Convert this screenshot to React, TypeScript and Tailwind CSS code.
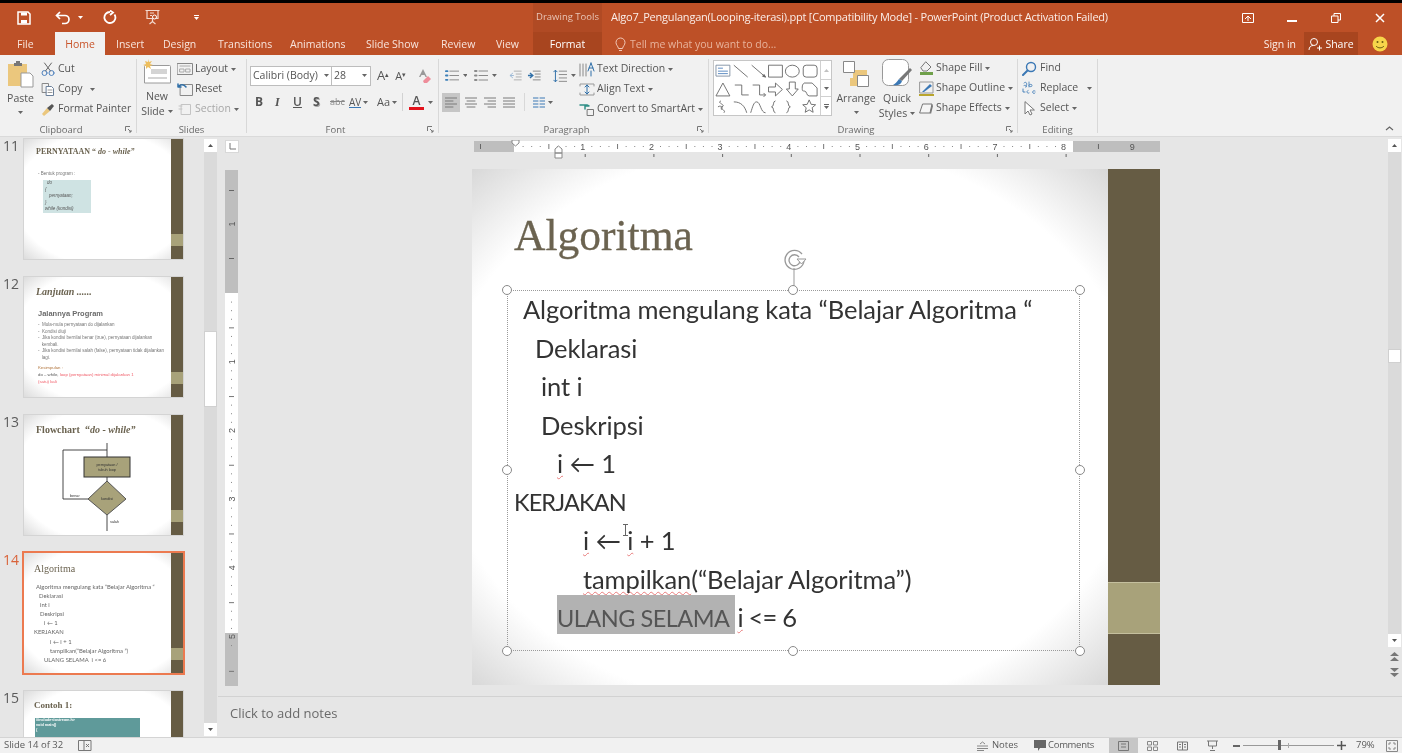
import type { ReactNode } from "react";

const Caret = ({ className = "" }: { className?: string }) => (
  <svg width="5" height="3" viewBox="0 0 5 3" className={className}>
    <path d="M0 0h5L2.5 3z" fill="#666" />
  </svg>
);

const Launcher = () => (
  <svg width="7" height="7" viewBox="0 0 7 7" className="absolute right-[4px] bottom-0">
    <path d="M.5 5V.5H5M3 3l3 3M6 4v2H4" fill="none" stroke="#777" />
  </svg>
);

const Group = ({ width, label, launcher, children }: { width: string; label: string; launcher?: boolean; children: ReactNode }) => (
  <div className={`${width} relative mt-[4px] flex h-[74px] shrink-0 flex-col border-r border-[#D8D8D8]`}>
    <div className="flex h-[60px] min-h-0">{children}</div>
    <div className={`mt-auto -mb-[3px] text-center text-[9.500px] leading-[13px] tracking-normal text-[#6a6a6a] ${launcher ? "pr-[14px]" : ""}`}>{label}</div>
    {launcher && <Launcher />}
  </div>
);

const Item = ({ icon, label, caret, muted, iconWidth = "w-[16px]", caretGap = "ml-[3px]" }: { icon: ReactNode; label: string; caret?: boolean; muted?: boolean; iconWidth?: string; caretGap?: string }) => (
  <div className={`flex h-[20px] items-center whitespace-nowrap ${muted ? "text-[#a8a8a8]" : "text-[#555]"}`}>
    <span className={`${iconWidth} flex shrink-0 justify-center`}>{icon}</span>
    <span className="ml-[2px]">{label}</span>
    {caret && <Caret className={caretGap} />}
  </div>
);

const Big = ({ width, icon, top, bottom, caret }: { width: string; icon: ReactNode; top: string; bottom?: string; caret?: boolean }) => (
  <div className={`${width} flex shrink-0 flex-col items-center text-[#555]`}>
    <div className="flex h-[34px] items-center">{icon}</div>
    <div className="mt-[2px] h-[15px] leading-[15px]">{top}</div>
    <div className="flex h-[15px] items-center leading-[15px]">
      {bottom}
      {caret && <Caret className={bottom ? "ml-[3px]" : ""} />}
    </div>
  </div>
);

const Ico = ({ w = 14, h = 14, children }: { w?: number; h?: number; children: ReactNode }) => (
  <svg width={w} height={h} viewBox={`0 0 ${w} ${h}`} fill="none" strokeLinecap="round" strokeLinejoin="round">
    {children}
  </svg>
);

const ListIcon = ({ dots }: { dots: string }) => (
  <Ico w={14} h={13}>
    <path d="M5 2h9M5 6.5h9M5 11h9" stroke="#8a8a8a" />
    <path d="M1 2h1.5M1 6.5h1.5M1 11h1.5" stroke={dots} strokeWidth="2" />
  </Ico>
);

const AlignIcon = ({ d, color = "#7a7a7a" }: { d: string; color?: string }) => (
  <Ico w={12} h={11}>
    <path d={d} stroke={color} />
  </Ico>
);

function TitleRows() {
  return (
    <header className="shrink-0 bg-[#BD5027] text-white">
      <div className="h-[3px] bg-black" />
      <div className="flex h-[29px] items-center">
        <div className="flex h-full w-[533px] shrink-0 items-center">
          <svg width="16" height="16" viewBox="0 0 16 16" className="ml-[16px]">
            <path d="M2 2h10l2 2v10H2z" fill="none" stroke="#fff" strokeWidth="1.5" />
            <path d="M5 2.5h6v3H5zM5 10h6v3.5H5z" fill="#fff" />
          </svg>
          <svg width="16" height="14" viewBox="0 0 16 14" className="ml-[23px]">
            <path d="M5 1L1.5 4.5 5 8M2 4.500h8a4 4 0 0 1 0 8H7" fill="none" stroke="#fff" strokeWidth="1.7" />
          </svg>
          <Caret className="ml-[7px] [&>path]:fill-white" />
          <svg width="15" height="15" viewBox="0 0 15 15" className="ml-[19px]">
            <path d="M12.500 4.500A5.500 5.500 0 1 1 8 2M8 .5L11 2.500 8 5" fill="none" stroke="#fff" strokeWidth="1.8" />
          </svg>
          <svg width="17" height="17" viewBox="0 0 17 17" className="ml-[27px]">
            <path d="M1.500 1.500h14M3 1.500v8h11v-8M8.500 9.500v3M5.500 15l3-2.500 3 2.500" fill="none" stroke="#f3d9cf" strokeWidth="1.200" />
            <path d="M6 4h4M6 6.500h2" stroke="#f3d9cf" />
            <circle cx="10.500" cy="8" r="2" fill="#BD5027" stroke="#fff" />
          </svg>
          <span className="ml-[33px] flex flex-col items-center gap-[1px]">
            <span className="h-[1px] w-[5px] bg-white" />
            <Caret className="[&>path]:fill-white" />
          </span>
        </div>
        <div className="flex h-full w-[69px] shrink-0 items-center justify-center bg-[#B04A24] text-[9.500px] text-[#e9c6b8]">Drawing Tools</div>
        <div className="ml-[9px] text-[11px] tracking-[-0.21px] whitespace-nowrap text-[#fbeee9]">Algo7_Pengulangan(Looping-iterasi).ppt [Compatibility Mode] - PowerPoint (Product Activation Failed)</div>
        <div className="ml-auto flex">
          <span className="flex w-[44px] justify-center">
            <svg width="12" height="10" viewBox="0 0 12 10"><path d="M.5.500h11v9H.5z" fill="none" stroke="#fff" /><path d="M3 6l3-3 3 3M6 3v5" stroke="#fff" fill="none" /></svg>
          </span>
          <span className="flex w-[44px] items-center justify-center">
            <span className="mt-[6px] h-[2px] w-[10px] bg-white" />
          </span>
          <span className="flex w-[44px] justify-center">
            <svg width="10" height="10" viewBox="0 0 10 10"><path d="M.5 3h6.500v6.500H.5zM3 3V.5h6.500V7H7" fill="none" stroke="#fff" /></svg>
          </span>
          <span className="flex w-[44px] justify-center">
            <svg width="10" height="10" viewBox="0 0 10 10"><path d="M1 1l8 8M9 1l-8 8" stroke="#fff" strokeWidth="1.500" /></svg>
          </span>
        </div>
      </div>
      <div className="flex h-[23px] text-[10.500px] leading-[24px] text-[#f8e4dc]">
        <div className="flex w-[533px] shrink-0">
          <span className="ml-[17px] w-[38px]">File</span>
          <span className="w-[50px] bg-[#F1F1F1] text-center text-[#C9552B]">Home</span>
          <span className="ml-[11px] w-[47px]">Insert</span>
          <span className="w-[55px]">Design</span>
          <span className="w-[72px]">Transitions</span>
          <span className="w-[76px]">Animations</span>
          <span className="w-[75px]">Slide Show</span>
          <span className="w-[55px]">Review</span>
          <span>View</span>
        </div>
        <div className="w-[69px] shrink-0 bg-[#A8451F] text-center text-white">Format</div>
        <svg width="11" height="15" viewBox="0 0 11 15" className="mt-[5px] ml-[13px]">
          <path d="M3.500 11.500C3 9 1 8 1 5.500a4.500 4.500 0 0 1 9 0C10 8 8 9 7.500 11.500zM4 13.500h3" fill="none" stroke="#f2c9b8" />
        </svg>
        <span className="ml-[4px] text-[#e8b39c]">Tell me what you want to do...</span>
        <div className="ml-auto flex">
          <span className="mr-[8px] text-[#fbeee9]">Sign in</span>
          <span className="flex h-[23px] w-[54px] items-center justify-center gap-[3px] bg-[#A8451F] text-white">
            <svg width="14" height="14" viewBox="0 0 14 14"><circle cx="6" cy="5" r="3.500" fill="none" stroke="#fff" /><path d="M1 13c0-3 2-4.500 4-4.500M9 11h5M11.500 8.500v5" stroke="#fff" fill="none" /></svg>
            Share
          </span>
          <span className="mx-[14px] flex items-center">
            <svg width="16" height="16" viewBox="0 0 16 16">
              <circle cx="8" cy="8" r="7.500" fill="#F7D54A" />
              <circle cx="5.500" cy="6" r="1" fill="#6b5a10" />
              <circle cx="10.500" cy="6" r="1" fill="#6b5a10" />
              <path d="M4 10c2 2.500 6 2.500 8 0" fill="none" stroke="#6b5a10" />
            </svg>
          </span>
        </div>
      </div>
    </header>
  );
}

const Gallery = () => (
  <div className="mt-[1px] ml-[4px] flex h-[56px] w-[119px] shrink-0 border border-[#C6C6C6] bg-white">
    <svg width="107" height="54" viewBox="0 0 107 54" fill="none" stroke="#666" strokeWidth="0.9">
      <path d="M2 4h14v11H2z" stroke="#7d8ca0" />
      <path d="M4 7h5M4 10h10M4 12.500h10" stroke="#4f81bd" />
      <path d="M20 4l14 12M38 4l14 12" />
      <path d="M52 16l-3-.8 1.500-1.800z" fill="#666" />
      <path d="M55 4h14v12H55z" />
      <ellipse cx="79" cy="10" rx="7" ry="6" />
      <rect x="90" y="4" width="14" height="12" rx="3" />
      <path d="M9 22l7 13H2zM21 24h7v10h7M39 24h7v10h6M50 32l2 2-2 2" />
      <path d="M55 26h7v-4l7 6.500-7 6.500v-4h-7zM76 21h6v7h3l-6 7-6-7h3zM91 22h8l5 5v8H96c-3 0-2-5-5-5-2 0-2 0-2-4 0-3 2-4 2-4z" />
      <path d="M7 40c-5 2 6 4 1 6-4 2 5 3 2 6M4 46c3-2 6 1 3 3M20 41c7 0 11 4 13 11M37 52c2-6 3-11 6-11 4 0 4 11 9 11" />
      <path d="M62 40c-3 0-1 6-4 6 3 0 1 6 4 6M73 40c3 0 1 6 4 6-3 0-1 6-4 6" />
      <path d="M96 39l2 4.500 4.500.4-3.500 3 1 4.600-4-2.400-4 2.400 1-4.600-3.500-3 4.500-.4z" />
    </svg>
    <div className="flex w-[11px] flex-col border-l border-[#D0D0D0]">
      <span className="flex h-[18px] items-center justify-center"><Caret className="rotate-180 opacity-40" /></span>
      <span className="flex h-[18px] items-center justify-center border-y border-[#D0D0D0]"><Caret /></span>
      <span className="flex flex-1 flex-col items-center justify-center gap-[1px]"><span className="h-[1px] w-[5px] bg-[#666]" /><Caret /></span>
    </div>
  </div>
);

function Ribbon() {
  return (
    <section className="flex h-[82px] shrink-0 border-b border-[#DADADA] bg-[#F1F1F1] text-[10.500px]">
      <Group width="w-[137px]" label="Clipboard" launcher>
        <Big
          width="ml-[6px] w-[29px]"
          icon={
            <svg width="27" height="28" viewBox="0 0 27 28">
              <path d="M1 4h19v22H1z" fill="#EBC77D" />
              <path d="M7 3h2V1h4v2h2v3H7z" fill="#777" />
              <path d="M14 13h9l3 3v11H14z" fill="#fff" stroke="#999" />
            </svg>
          }
          top="Paste"
          caret
        />
        <div className="ml-[5px]">
          <Item icon={<Ico><circle cx="3.500" cy="11" r="2.500" stroke="#4f81bd" /><circle cx="10.500" cy="11" r="2.500" stroke="#4f81bd" /><path d="M4.500 9L10.500 1M9.500 9L3.500 1" stroke="#666" /></Ico>} label="Cut" />
          <Item icon={<Ico><path d="M1.500 1.500h6v9h-6z" stroke="#888" /><path d="M5.500 4.500h5l2 2v7h-7z" fill="#fff" stroke="#6b7f99" /><path d="M7 8h4M7 10.500h4" stroke="#999" /></Ico>} label="Copy" caret caretGap="ml-[7px]" />
          <Item icon={<Ico><path d="M1 12l5-6 3 3-6 5z" fill="#EBC77D" /><path d="M6 6l3 3 4-5-2-2z" fill="#555" /></Ico>} label="Format Painter" />
        </div>
      </Group>

      <Group width="w-[110px]" label="Slides">
        <Big
          width="ml-[2px] w-[36px]"
          icon={
            <svg width="28" height="28" viewBox="0 0 28 28">
              <path d="M2.500 6.500h24a1 1 0 0 1 1 1V24h-26V7.500a1 1 0 0 1 1-1z" fill="#fff" stroke="#9a9a9a" />
              <path d="M8 10h16v5H8zM5 18h19v2H5z" fill="#d4d4d4" />
              <path d="M5 0l1 3 3-1-2 3 3 1-3 1 1 3-3-2-2 2 0-3-3-1 3-1-1-3 3 1z" fill="#EDBE5E" />
            </svg>
          }
          top="New"
          bottom="Slide"
          caret
        />
        <div className="ml-[2px]">
          <Item icon={<Ico w={16} h={12}><path d="M.5.500h15v11H.5z" stroke="#888" /><path d="M3 3h10M3 6h4v3H3zM9 6h4v3H9z" stroke="#aaa" /></Ico>} label="Layout" caret />
          <Item icon={<Ico w={16} h={13}><path d="M3.500 1.500h12v11h-12z" stroke="#888" /><path d="M1 4c2-3 6-3 8 0M1 1v3h3" stroke="#2f6fa8" strokeWidth="1.500" /></Ico>} label="Reset" />
          <Item muted icon={<Ico w={14} h={13}><path d="M3.500 1.500h9v10h-9zM1 3h3M1 6h3" stroke="#c4c4c4" /></Ico>} label="Section" caret />
        </div>
      </Group>

      <Group width="w-[192px]" label="Font" launcher>
        <div className="pt-[6px] pl-[3px]">
          <div className="flex h-[21px] items-center">
            <div className="flex h-[20px] w-[82px] items-center border border-[#BDBDBD] bg-white pl-[2px] whitespace-nowrap text-[#555]">
              Calibri (Body)
              <Caret className="mr-[2px] ml-auto" />
            </div>
            <div className="-ml-[1px] flex h-[20px] w-[40px] items-center border border-[#BDBDBD] bg-white pl-[2px] text-[#555]">
              28
              <Caret className="mr-[3px] ml-auto" />
            </div>
            <span className="ml-[6px] text-[13px] leading-none text-[#555]">A<sup className="text-[7px]">▴</sup></span>
            <span className="ml-[6px] text-[11px] leading-none text-[#555]">A<sup className="text-[7px]">▾</sup></span>
            <svg width="14" height="16" viewBox="0 0 14 16" className="ml-[11px]">
              <path d="M6 1L2 9h1.500l1-2h3l1 2H10z" fill="#999" />
              <path d="M6 13l5-5 3 3-4 4H7z" fill="#EE8D9A" />
            </svg>
          </div>
          <div className="mt-[5px] flex h-[22px] items-center text-[12px] text-[#555]">
            <span className="ml-[5px] w-[20px] font-bold">B</span>
            <span className="w-[18px] font-['Liberation_Serif',serif] font-bold italic">I</span>
            <span className="w-[20px] font-semibold underline">U</span>
            <span className="w-[17px] font-bold [text-shadow:1px_1px_0_#aaa]">S</span>
            <span className="w-[19px] text-[9px] text-[#888] line-through">abc</span>
            <span className="flex w-[28px] items-center gap-[2px] text-[10px] leading-none text-[#555]">
              <span className="border-b border-[#3b78b5]">AV</span>
              <Caret />
            </span>
            <span className="flex w-[24px] items-center gap-[2px] text-[11px]">Aa<Caret /></span>
            <span className="mr-[4px] ml-[1px] h-[18px] w-[1px] bg-[#D2D2D2]" />
            <span className="ml-[2px] flex w-[15px] flex-col items-center text-[12px] leading-[12px] font-semibold text-[#555]">
              A<span className="h-[3px] w-[15px] bg-[#E3121C]" />
            </span>
            <Caret className="ml-[4px]" />
          </div>
        </div>
      </Group>

      <Group width="w-[270px]" label="Paragraph" launcher>
        <div className="flex">
          <div className="w-[137px] pt-[6px] pl-[3px]">
            <div className="flex h-[21px] items-center pl-[3px]">
              <ListIcon dots="#3b7fb8" />
              <Caret className="ml-[4px]" />
              <span className="ml-[7px]"><ListIcon dots="#8a8a8a" /></span>
              <Caret className="ml-[4px]" />
              <svg width="14" height="11" viewBox="0 0 14 11" className="ml-[11px]"><path d="M6 1h8M8 4h6M8 7h6M6 10h8" stroke="#b0b0b0" /><path d="M5 3L2 5.500 5 8M2 5.500h4" stroke="#9cb9d6" fill="none" /></svg>
              <svg width="14" height="11" viewBox="0 0 14 11" className="ml-[5px]"><path d="M6 1h8M8 4h6M8 7h6M6 10h8" stroke="#888" /><path d="M3 3l3 2.500L3 8M1 5.500h4" stroke="#2f6fa8" fill="none" strokeWidth="1.400" /></svg>
              <svg width="15" height="14" viewBox="0 0 15 14" className="ml-[12px]"><path d="M6 2h9M6 5.500h9M6 9h9M6 12.500h9" stroke="#8a8a8a" /><path d="M2.500 1v12M.5 3l2-2 2 2M.5 11l2 2 2-2" stroke="#2f6fa8" fill="none" /></svg>
              <Caret className="ml-[4px]" />
            </div>
            <div className="mt-[5px] flex h-[22px] items-center">
              <span className="flex h-[19px] w-[18px] items-center justify-center bg-[#C6C6C6]"><AlignIcon d="M0 1h12M0 4h8M0 7h12M0 10h8" /></span>
              <span className="ml-[4px] flex w-[14px] justify-center"><AlignIcon d="M0 1h12M2 4h8M0 7h12M2 10h8" /></span>
              <span className="ml-[5px] flex w-[14px] justify-center"><AlignIcon d="M0 1h12M4 4h8M0 7h12M4 10h8" /></span>
              <span className="ml-[5px] flex w-[14px] justify-center"><AlignIcon d="M0 1h12M0 4h12M0 7h12M0 10h12" /></span>
              <span className="ml-[8px] h-[18px] w-[1px] bg-[#D8D8D8]" />
              <span className="ml-[8px]"><AlignIcon d="M0 1h5M7 1h5M0 4h5M7 4h5M0 7h5M7 7h5M0 10h5M7 10h5" color="#3b78b5" /></span>
              <Caret className="ml-[3px]" />
            </div>
          </div>
          <div className="ml-[3px]">
            <Item icon={<Ico w={16} h={15}><path d="M1 2v12M4 2v12M7 2v12" stroke="#888" /><path d="M12 1l-3 8M12 1l3 8M10 6h4M12 9v5" stroke="#2f6fa8" /></Ico>} label="Text Direction" caret />
            <Item icon={<Ico w={16} h={13}><path d="M1 3V1h14v2M1 10v2h14v-2" stroke="#999" /><path d="M8 2v9M6 4l2-2 2 2M6 9l2 2 2-2" stroke="#2f6fa8" /></Ico>} label="Align Text" caret />
            <Item icon={<Ico w={16} h={13}><path d="M1 2h7l2 1H6v3" stroke="#2f8f86" strokeWidth="1.500" /><path d="M8.500 6.500h6v6h-6z" stroke="#777" /></Ico>} label="Convert to SmartArt" caret />
          </div>
        </div>
      </Group>

      <Group width="w-[309px]" label="Drawing" launcher>
        <div className="flex">
          <Gallery />
          <Big
            width="ml-[3px] w-[42px]"
            icon={
              <svg width="28" height="28" viewBox="0 0 28 28">
                <path d="M11 10h14v8H11zM8 18h10v8H8z" fill="#EBC77D" />
                <path d="M1.500 1.500h11v11h-11z" fill="#fff" stroke="#888" />
                <path d="M15.500 15.500h11v11h-11z" fill="#fff" stroke="#888" />
              </svg>
            }
            top="Arrange"
            caret
          />
          <Big
            width="w-[40px]"
            icon={
              <svg width="30" height="30" viewBox="0 0 30 30">
                <rect x=".5" y=".5" width="26" height="26" rx="6" fill="#fff" stroke="#999" />
                <path d="M28 9l2 2-10 11-3-2z" fill="#777" />
                <path d="M17 20l3 2c-1 4-5 5-9 4 2-1 4-3 6-6z" fill="#3B78B5" />
              </svg>
            }
            top="Quick"
            bottom="Styles"
            caret
          />
          <div className="-mt-[1px] ml-[1px]">
            <Item icon={<Ico w={15} h={15}><path d="M7 1l5 5-4 4H4L2 7z" stroke="#777" /><path d="M1 11h13v3H1z" fill="#6FA04A" /></Ico>} label="Shape Fill" caret />
            <Item icon={<Ico w={15} h={15}><path d="M1 1h13v11H1z" stroke="#999" /><path d="M3 11l8-8 2 2-8 6z" fill="#3B78B5" /><path d="M0 14h15" stroke="#B9A52E" strokeWidth="2" /></Ico>} label="Shape Outline" caret />
            <Item icon={<Ico w={15} h={13}><path d="M4 2h9l-2 9H1z" fill="#F5F5F5" stroke="#777" /><path d="M13 2l1 2-2 8-1-1z" fill="#777" /></Ico>} label="Shape Effects" caret />
          </div>
        </div>
      </Group>

      <Group width="w-[80px]" label="Editing">
        <div className="-mt-[1px] pl-[3px]">
          <Item iconWidth="w-[17px]" icon={<Ico w={15} h={15}><circle cx="9" cy="6" r="4.500" stroke="#3B78B5" strokeWidth="1.400" /><path d="M5.500 9.500L1 14" stroke="#3B78B5" strokeWidth="2" /></Ico>} label="Find" />
          <Item iconWidth="w-[17px]" icon={<Ico w={15} h={14}><path d="M2 2c2-2 4 0 2 4M2 4.500c2-1 3 1 2 1.500M7 1v5M7 4c1-1 3-1 3 .5S8 6 7 5" stroke="#3B78B5" strokeWidth=".8" /><path d="M1 8v3h2M7 12c-2 1-3-2-1-2.500M13 10c-2-1-3 1-2 2s2 0 2 0" stroke="#3B78B5" strokeWidth=".9" /></Ico>} label="Replace" caret caretGap="ml-[9px]" />
          <Item iconWidth="w-[17px]" icon={<Ico w={11} h={15}><path d="M1 1v12l3-3 2 4 2-1-2-4h4z" fill="#fff" stroke="#777" /></Ico>} label="Select" caret />
        </div>
      </Group>

      <div className="relative flex-1">
        <svg width="9" height="5" viewBox="0 0 9 5" className="absolute right-[8px] bottom-[5px]"><path d="M1 4l3.500-3L8 4" fill="none" stroke="#666" strokeWidth="1.200" /></svg>
      </div>
    </section>
  );
}

const Thumb = ({ n, active, children }: { n: number; active?: boolean; children: ReactNode }) => (
  <div className="flex shrink-0">
    <span className={`w-[24px] pl-[3px] text-[14px] leading-[14px] ${active ? "text-[#D9633A]" : "text-[#5b5b5b]"}`}>{n}</span>
    <div className={`relative h-[120px] w-[159px] shrink-0 bg-[radial-gradient(ellipse_at_center,#ffffff_78%,#dcdcdc_100%)] font-['Liberation_Sans',sans-serif] ${active ? "outline-2 outline-[#EC7A50]" : "outline outline-[#D4D4D4]"}`}>
      <div className="absolute top-0 right-0 flex h-full w-[12px] flex-col bg-[#665C44]">
        <span className="mt-[95px] h-[12px] bg-[#A8A27A]" />
      </div>
      {children}
    </div>
  </div>
);

const ThumbTitle = ({ className, children }: { className: string; children: ReactNode }) => (
  <div className={`absolute leading-none whitespace-nowrap text-[#6B6350] font-['Liberation_Serif',serif] ${className}`}>{children}</div>
);

const MiniLines = ({ lines, className }: { lines: string[]; className: string }) => (
  <div className={`absolute whitespace-pre text-[#777] ${className}`}>
    {lines.map((l, i) => (
      <div key={i}>{l}</div>
    ))}
  </div>
);

const miniSlide = [
  { pad: "pl-[2px]", text: "Algoritma mengulang kata “Belajar Algoritma “" },
  { pad: "pl-[5px]", text: "Deklarasi" },
  { pad: "pl-[6px]", text: "int i" },
  { pad: "pl-[6px]", text: "Deskripsi" },
  { pad: "pl-[10px]", text: "i ← 1" },
  { pad: "pl-0", text: "KERJAKAN" },
  { pad: "pl-[16px]", text: "i ← i + 1" },
  { pad: "pl-[16px]", text: "tampilkan(“Belajar Algoritma ”)" },
  { pad: "pl-[10px]", text: "ULANG SELAMA  i <= 6" },
];

function Thumbs() {
  return (
    <aside className="flex w-[218px] shrink-0 overflow-hidden">
      <div className="flex w-[203px] shrink-0 flex-col gap-[18px] pt-[2px]">
        <Thumb n={11}>
          <ThumbTitle className="top-[9px] left-[12px] text-[8px] font-bold">PERNYATAAN “ <i>do - while”</i></ThumbTitle>
          <MiniLines className="top-[32px] left-[14px] text-[4.500px]" lines={["- Bentuk program :"]} />
          <div className="absolute top-[41px] left-[19px] h-[33px] w-[48px] bg-[#CFE3E3] pl-[2px] text-[4.500px] leading-[6.500px] text-[#555] italic">
            <div className="pl-[2px]">do</div>
            <div>{"{"}</div>
            <div className="pl-[4px]">pernyataan;</div>
            <div>{"}"}</div>
            <div>while (kondisi)</div>
          </div>
        </Thumb>
        <Thumb n={12}>
          <ThumbTitle className="top-[10px] left-[12px] text-[10px] font-bold italic">Lanjutan ......</ThumbTitle>
          <div className="absolute top-[31px] left-[14px] text-[7.500px] font-bold text-[#6a6a6a]">Jalannya Program</div>
          <MiniLines
            className="top-[45px] left-[14px] text-[4.500px] leading-[6.600px]"
            lines={["-  Mula-mula pernyataan do dijalankan", "-  Kondisi diuji", "-  Jika kondisi bernilai benar (true), pernyataan dijalankan", "   kembali.", "-  Jika kondisi bernilai salah (false), pernyataan tidak dijalankan", "   lagi."]}
          />
          <div className="absolute top-[88px] left-[14px] text-[4.300px] leading-[6px] whitespace-nowrap text-[#B0733A]">Kesimpulan :</div>
          <div className="absolute top-[95px] left-[14px] text-[4.300px] leading-[6px] whitespace-nowrap text-[#F05A66]"><span className="text-[#555]">do – while,</span> loop (pernyataan) minimal dijalankan 1</div>
          <div className="absolute top-[102px] left-[14px] text-[4.300px] leading-[6px] whitespace-nowrap text-[#F05A66]">(satu) kali</div>
        </Thumb>
        <Thumb n={13}>
          <ThumbTitle className="top-[10px] left-[12px] text-[10px] font-bold">Flowchart &nbsp;“<i>do - while”</i></ThumbTitle>
          <svg width="100" height="90" viewBox="0 0 100 90" className="absolute top-[28px] left-[34px]" fontFamily="Liberation Sans, sans-serif">
            <path d="M5 7h44M49 0v14M5 7v49h25M49 34v4M49 72v16" fill="none" stroke="#333" strokeWidth="0.900" />
            <rect x="26" y="14" width="46" height="20" fill="#A8A27A" stroke="#333" />
            <path d="M49 38l19 18-19 16-19-16z" fill="#A8A27A" stroke="#555" />
            <text x="49" y="23" fontSize="3.800" textAnchor="middle" fill="#333">pernyataan /</text>
            <text x="49" y="28" fontSize="3.800" textAnchor="middle" fill="#333">tubuh loop</text>
            <text x="49" y="57" fontSize="3.800" textAnchor="middle" fill="#333">kondisi</text>
            <text x="12" y="54" fontSize="3.800" fill="#333">benar</text>
            <text x="52" y="80" fontSize="3.800" fill="#333">salah</text>
          </svg>
        </Thumb>
        <Thumb n={14} active>
          <ThumbTitle className="top-[11px] left-[10px] text-[10px]">Algoritma</ThumbTitle>
          <div className="absolute top-[29px] left-[10px] font-['Lato',sans-serif] text-[5.900px] leading-[9.100px] whitespace-pre text-[#666]">
            {miniSlide.map((l) => (
              <div key={l.text} className={l.pad}>{l.text}</div>
            ))}
          </div>
        </Thumb>
        <Thumb n={15}>
          <ThumbTitle className="top-[10px] left-[10px] text-[9px] font-bold">Contoh 1:</ThumbTitle>
          <div className="absolute top-[27px] left-[11px] h-[40px] w-[105px] bg-[#5F9A9A] pl-[1px] text-[3.800px] leading-[5px] font-bold text-white">
            <div>#include&lt;iostream.h&gt;</div>
            <div>void main()</div>
            <div>{"{"}</div>
          </div>
        </Thumb>
      </div>
      <ScrollBar width="ml-[1px] mt-[2px] w-[13px]" height="h-[597px]" thumb="mt-[179px] h-[76px]" />
    </aside>
  );
}

const ScrollBar = ({ width, height, thumb }: { width: string; height: string; thumb: string }) => (
  <div className={`${width} ${height} flex shrink-0 flex-col bg-[#DADADA]`}>
    <span className="flex h-[13px] shrink-0 items-center justify-center bg-white"><Caret className="rotate-180 [&>path]:fill-[#555]" /></span>
    <span className={`${thumb} shrink-0 border border-[#D0D0D0] bg-white`} />
    <span className="mt-auto flex h-[13px] shrink-0 items-center justify-center bg-white"><Caret className="[&>path]:fill-[#555]" /></span>
  </div>
);

const inches = [0, 1, 2, 3, 4, 5, 6, 7, 8];
const PX = 68.7;

const HRuler = () => (
  <svg width="690" height="20" viewBox="0 0 690 20" className="block" fontFamily="Liberation Sans, sans-serif">
    <rect x="0" y="1" width="40" height="11" fill="#BEBEBE" />
    <rect x="40" y="1" width="559" height="11" fill="#fff" />
    <rect x="599" y="1" width="87" height="11" fill="#BEBEBE" />
    <rect x="6" y="4" width="1" height="5" fill="#666" />
    {Array.from({ length: 64 }, (_, i) => 40 + (i * PX) / 8).map((x, i) =>
      i % 4 === 0 || x > 596 ? null : <rect key={i} x={x} y="6" width="1" height="1" fill="#888" />
    )}
    {inches.map((n) => (
      <rect key={n} x={40 + n * PX + PX / 2} y="4" width="1" height="5" fill={n === 8 ? "#666" : "#777"} />
    ))}
    {inches.slice(1).map((n) => (
      <g key={n}>
        <text x={40 + n * PX} y="10" fontSize="9" textAnchor="middle" fill="#555">{n}</text>
        <rect x={42 + n * PX} y="14" width="1" height="3" fill="#666" />
      </g>
    ))}
    <text x={40 + 9 * PX} y="10" fontSize="9" textAnchor="middle" fill="#555">9</text>
    <path d="M38 0h7v3l-3.500 3-3.500-3z" fill="#fff" stroke="#888" />
    <path d="M81 9l3.500-3 3.500 3v4h-7zM81 13h7v5h-7z" fill="#fff" stroke="#888" />
  </svg>
);

const VRuler = () => (
  <svg width="13" height="516" viewBox="0 0 13 516" className="block" fontFamily="Liberation Sans, sans-serif">
    <rect x="0" y="0" width="13" height="123" fill="#BEBEBE" />
    <rect x="0" y="123" width="13" height="340" fill="#fff" />
    <rect x="0" y="463" width="13" height="53" fill="#BEBEBE" />
    <rect x="4" y="20" width="5" height="1" fill="#666" />
    <rect x="4" y="88" width="5" height="1" fill="#666" />
    <text x="0" y="0" fontSize="9" textAnchor="middle" fill="#555" transform="translate(9.500 54) rotate(-90)">1</text>
    {Array.from({ length: 42 }, (_, i) => 123 + (i * PX) / 8).map((y, i) =>
      i % 4 === 0 ? null : <rect key={i} x="6" y={y} width="1" height="1" fill="#888" />
    )}
    {[0, 1, 2, 3, 4, 5].map((n) => (
      <rect key={n} x="4" y={123 + n * PX + PX / 2} width="5" height="1" fill="#777" />
    ))}
    {[1, 2, 3, 4, 5].map((n) => (
      <text key={n} x="0" y="0" fontSize="9" textAnchor="middle" fill="#555" transform={`translate(9.500 ${123 + n * PX}) rotate(-90)`}>{n}</text>
    ))}
  </svg>
);

const Handle = ({ className }: { className: string }) => (
  <span className={`absolute h-[10px] w-[10px] rounded-full border border-[#8a8a8a] bg-white ${className}`} />
);

const Wavy = ({ children }: { children: ReactNode }) => (
  <span className="underline decoration-[#E87C7C] decoration-wavy decoration-1 underline-offset-[2px] [text-decoration-skip-ink:none]">{children}</span>
);

const lineCls = "h-[38.500px] whitespace-pre leading-[38.500px]";

function Slide() {
  return (
    <div className="relative flex h-[516px] w-[688px] shrink-0 bg-white font-['Lato',sans-serif] text-[#333]">
      <div className="h-full flex-1 bg-[radial-gradient(ellipse_at_center,#ffffff_78%,#d8d8d8_100%)]" />
      <div className="flex h-full w-[52px] flex-col bg-[#665C44]">
        <span className="mt-[413px] h-[52px] border-y border-[#C4BF9E] bg-[#A8A27A]" />
      </div>
      <h1 className="absolute top-[41px] left-[42px] font-['Liberation_Serif',serif] text-[43.500px] leading-[50px] text-[#6B6350] [-webkit-text-stroke:0.3px_#6B6350]">Algoritma</h1>

      <svg width="24" height="40" viewBox="0 0 24 40" className="absolute top-[80px] left-[311px]">
        <path d="M11 19v21" stroke="#999" />
        <path d="M19 5A9.500 9.500 0 1 0 21 12M16 8a5.500 5.500 0 1 0 1 4" fill="none" stroke="#999" strokeWidth="1.300" />
        <path d="M14 10h9l-4.500 5z" fill="#fff" stroke="#999" />
      </svg>

      <div className="absolute top-[121px] left-[35px] h-[361px] w-[573px] border border-dotted border-[#9a9a9a] text-[25.500px] tracking-[-0.1px]">
        <div className="-mt-[1px] flex flex-col">
          <div className={`${lineCls} pl-[15px]`}>Algoritma mengulang kata “Belajar Algoritma “</div>
          <div className={`${lineCls} pl-[27px]`}>Deklarasi</div>
          <div className={`${lineCls} pl-[33px]`}>int i</div>
          <div className={`${lineCls} pl-[33px]`}>Deskripsi</div>
          <div className={`${lineCls} pl-[49px]`}><Wavy>i</Wavy> ← 1</div>
          <div className={`${lineCls} pl-[6px] text-[23.500px] tracking-[-0.9px]`}>KERJAKAN</div>
          <div className={`${lineCls} pl-[75px]`}><Wavy>i</Wavy> ← <Wavy>i</Wavy> + 1</div>
          <div className={`${lineCls} pl-[75px]`}><Wavy>tampilkan</Wavy>(“Belajar Algoritma”)</div>
          <div className={`${lineCls} pl-[49px]`}>
            <span className="inline-block h-[35px] bg-[#B2B2B2] pr-[6px] text-[23.500px] tracking-[-0.5px] text-[#555] shadow-[0_-4px_0_#B2B2B2]">ULANG SELAMA</span>
            <span className="ml-[2px] tracking-[-0.8px]"><Wavy>i</Wavy> &lt;= 6</span>
          </div>
        </div>
        <Handle className="-top-[6px] -left-[6px]" />
        <Handle className="-top-[6px] left-[280px]" />
        <Handle className="-top-[6px] -right-[6px]" />
        <Handle className="top-[174px] -left-[6px]" />
        <Handle className="top-[174px] -right-[6px]" />
        <Handle className="-bottom-[6px] -left-[6px]" />
        <Handle className="-bottom-[6px] left-[280px]" />
        <Handle className="-right-[6px] -bottom-[6px]" />
      </div>

      <svg width="7" height="12" viewBox="0 0 7 12" className="absolute top-[355px] left-[150px]">
        <path d="M1 .5h5M1 11.500h5M3.500 1v10" stroke="#666" />
      </svg>
    </div>
  );
}

function Editor() {
  return (
    <main className="flex h-[559px] shrink-0 overflow-hidden">
      <div className="ml-[7px] flex w-[13px] shrink-0 flex-col">
        <span className="mt-[3px] flex h-[13px] w-[14px] items-center justify-center border border-[#D8D8D8] bg-white">
          <svg width="7" height="7" viewBox="0 0 7 7"><path d="M1 0v6h6" fill="none" stroke="#777" /></svg>
        </span>
        <span className="mt-[17px]"><VRuler /></span>
      </div>
      <div className="ml-[234px] w-[900px] shrink-0">
        <div className="mt-[3px] ml-[2px] h-[29px]"><HRuler /></div>
        <Slide />
      </div>
    </main>
  );
}

function RightBar() {
  return (
    <div className="absolute top-[139px] right-[1px] flex flex-col items-center">
      <ScrollBar width="w-[13px]" height="h-[508px]" thumb="mt-[197px] h-[14px]" />
      <svg width="9" height="9" viewBox="0 0 9 9" className="mt-[5px]"><path d="M0 4l4.500-4L9 4zM0 9l4.500-4L9 9z" fill="#777" /></svg>
      <svg width="9" height="9" viewBox="0 0 9 9" className="mt-[7px]"><path d="M0 0h9L4.500 4zM0 5h9L4.500 9z" fill="#777" /></svg>
    </div>
  );
}

function StatusBar() {
  return (
    <footer className="flex h-[16px] shrink-0 items-center border-t border-[#D4D4D4] bg-[#F1F1F1] text-[9.500px] text-[#5a5a5a]">
      <span className="ml-[4px]">Slide 14 of 32</span>
      <svg width="14" height="12" viewBox="0 0 14 12" className="ml-[15px]"><path d="M6 .5H.5v10H6M6 .5h7v10H6z" fill="none" stroke="#777" /><path d="M8 4l3 3M11 4L8 7" stroke="#777" /></svg>
      <div className="ml-auto flex h-full items-center">
        <svg width="11" height="10" viewBox="0 0 11 10"><path d="M0 5h11M0 7.500h11M0 9.500h7M3 3l2.500-2L8 3" fill="none" stroke="#888" /></svg>
        <span className="ml-[4px]">Notes</span>
        <svg width="12" height="12" viewBox="0 0 12 12" className="ml-[16px]"><path d="M0 0h12v8H6l-2 3V8H0z" fill="#666" /></svg>
        <span className="ml-[2px] tracking-[-0.3px]">Comments</span>
        <span className="ml-[15px] flex h-[15px] w-[29px] items-center justify-center bg-[#C6C6C6]">
          <svg width="11" height="10" viewBox="0 0 11 10"><path d="M.5.500h10v9H.5zM3 3h5M3 6h5" fill="none" stroke="#777" /></svg>
        </span>
        <span className="ml-[9px]"><svg width="11" height="10" viewBox="0 0 11 10" className="block"><path d="M.5.500h4v3.500h-4zM6.500.500h4v3.500h-4zM.5 6h4v3.500h-4zM6.500 6h4v3.500h-4z" fill="none" stroke="#888" /></svg></span>
        <span className="ml-[19px]"><svg width="11" height="10" viewBox="0 0 11 10" className="block"><path d="M.5 1h10v8H.5zM5.500 1v8M2 3.500h2M7 3.500h2M2 6h2M7 6h2" fill="none" stroke="#777" /></svg></span>
        <span className="ml-[19px]"><svg width="11" height="11" viewBox="0 0 11 11" className="block"><path d="M0 1h11M1.500 1v5h8V1M5.500 6v3M3 10.500h5" fill="none" stroke="#777" /></svg></span>
        <span className="ml-[15px] h-[2px] w-[7px] bg-[#666]" />
        <span className="relative ml-[3px] h-[1px] w-[91px] bg-[#999]">
          <span className="absolute -top-[5px] left-[35px] h-[10px] w-[3px] bg-[#666]" />
          <span className="absolute -top-[2px] left-[45px] h-[5px] w-[1px] bg-[#aaa]" />
        </span>
        <svg width="9" height="9" viewBox="0 0 9 9" className="ml-[3px]"><path d="M0 4.500h9M4.500 0v9" stroke="#555" strokeWidth="1.500" /></svg>
        <span className="ml-[10px] w-[24px]">79%</span>
        <svg width="12" height="12" viewBox="0 0 12 12" className="mr-[4px] ml-[6px]"><path d="M.5.500h11v11H.5zM3 3h2M3 3v2M9 3H7M9 3v2M3 9h2M3 9V7M9 9H7M9 9V7" fill="none" stroke="#888" /></svg>
      </div>
    </footer>
  );
}

export default function App() {
  return (
    <div className="relative flex h-[753px] w-[1402px] flex-col overflow-hidden bg-[#E6E6E6] font-['Open_Sans',sans-serif] text-[11px] blur-[0.35px]">
      <TitleRows />
      <Ribbon />
      <div className="flex min-h-0 flex-1">
        <Thumbs />
        <div className="flex min-w-0 flex-1 flex-col">
          <Editor />
          <div className="flex-1 border-t border-[#D2D2D2] pt-[6px] pl-[12px] text-[13px] leading-[20px] text-[#6a6a6a]">Click to add notes</div>
        </div>
      </div>
      <RightBar />
      <StatusBar />
    </div>
  );
}
